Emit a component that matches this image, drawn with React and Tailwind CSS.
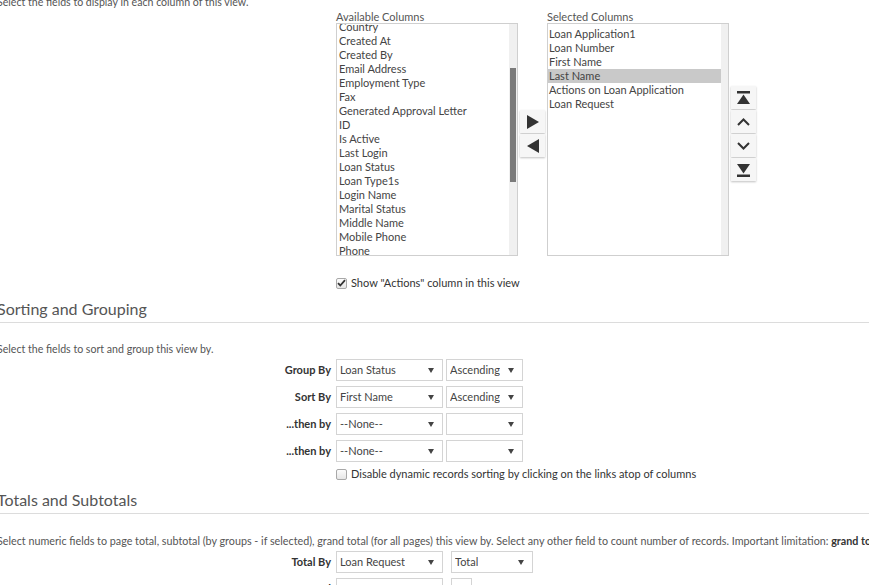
import React from "react";

const available = [
  "Country",
  "Created At",
  "Created By",
  "Email Address",
  "Employment Type",
  "Fax",
  "Generated Approval Letter",
  "ID",
  "Is Active",
  "Last Login",
  "Loan Status",
  "Loan Type1s",
  "Login Name",
  "Marital Status",
  "Middle Name",
  "Mobile Phone",
  "Phone",
];

const selected = [
  "Loan Application1",
  "Loan Number",
  "First Name",
  "Last Name",
  "Actions on Loan Application",
  "Loan Request",
];

const Caret = () => (
  <svg width="6" height="5" viewBox="0 0 6 5" className="shrink-0">
    <path d="M0 0h6L3 5z" fill="#444" />
  </svg>
);

const Select = ({ value, w }) => (
  <div
    className={`${w} h-[22px] border border-[#d4d4d4] bg-white flex items-center justify-between pl-[3px] pr-[8px] text-[#444]`}
  >
    <span className="whitespace-nowrap overflow-hidden">{value}</span>
    <Caret />
  </div>
);

const Check = ({ checked }) => (
  <span className="w-[11px] h-[11px] border border-[#a8a8a8] rounded-[2px] bg-gradient-to-b from-[#fcfcfc] to-[#e6e6e6] flex items-center justify-center shrink-0">
    {checked && (
      <svg width="9" height="8" viewBox="0 0 9 8">
        <path d="M1 4.2l2.3 2.3L8 1.2" stroke="#333" strokeWidth="1.8" fill="none" />
      </svg>
    )}
  </span>
);

const Btn = ({ children }) => (
  <div className="w-[25px] h-[23px] bg-[#f6f6f6] shadow-[0_1px_2px_rgba(0,0,0,0.25)] flex items-center justify-center">
    {children}
  </div>
);

const Heading = ({ children }) => (
  <div className="mt-[9px] border-b border-[#dcdcdc] pb-[3px]">
    <h2 className="-ml-[3px] text-[16px] leading-[20px] text-[#555]">{children}</h2>
  </div>
);

const Row = ({ label, a, b, wb = "w-[77px]", gap = "ml-[3px]", top = "mt-[5px]" }) => (
  <div className={`flex items-center ${top}`}>
    <div className="w-[331px] text-right font-bold text-[#333]">{label}</div>
    <div className="ml-[5px]">
      <Select value={a} w="w-[107px]" />
    </div>
    <div className={gap}>
      <Select value={b} w={wb} />
    </div>
  </div>
);

export default function App() {
  return (
    <div className="w-[869px] h-[585px] overflow-hidden bg-white font-['Lato','Noto_Sans',sans-serif] text-[11px] text-[#555]">
      <p className="-ml-[3px] -mt-[5px] leading-[14px] text-[10.6px]">
        Select the fields to display in each column of this view.
      </p>

      <div className="flex items-start ml-[336px] mt-[2px]">
        <div>
          <div className="leading-[12px] text-[#555]">Available Columns</div>
          <div className="relative w-[182px] h-[233px] border border-[#cfcfcf] overflow-hidden">
            <div className="-mt-[4px] pl-[2px] text-[#444]">
              {available.map((c) => (
                <div key={c} className="leading-[14px] whitespace-nowrap">
                  {c}
                </div>
              ))}
            </div>
            <div className="absolute right-0 top-0 bottom-0 w-[8px] bg-[#f0f0f0]">
              <div className="absolute left-[1px] top-[44px] w-[6px] h-[114px] bg-[#7b7b7b]" />
            </div>
          </div>
        </div>

        <div className="ml-[2px] pt-[99px] flex flex-col gap-[1px]">
          <Btn>
            <svg width="12" height="14" viewBox="0 0 12 14">
              <path d="M0 0l12 7L0 14z" fill="#333" />
            </svg>
          </Btn>
          <Btn>
            <svg width="12" height="14" viewBox="0 0 12 14">
              <path d="M12 0L0 7 12 14z" fill="#333" />
            </svg>
          </Btn>
        </div>

        <div className="ml-[2px]">
          <div className="leading-[12px] text-[#555]">Selected Columns</div>
          <div className="relative w-[182px] h-[233px] border border-[#cfcfcf] overflow-hidden">
            <div className="pt-[3px] text-[#444]">
              {selected.map((c) => (
                <div
                  key={c}
                  className={`leading-[14px] pl-[1px] w-[173px] whitespace-nowrap ${
                    c === "Last Name" ? "bg-[#c9c9c9]" : ""
                  }`}
                >
                  {c}
                </div>
              ))}
            </div>
            <div className="absolute right-0 top-0 bottom-0 w-[7px] bg-[#f0f0f0]" />
          </div>
        </div>

        <div className="ml-[2px] pt-[75px] flex flex-col gap-[1px]">
          <Btn>
            <svg width="13" height="14" viewBox="0 0 13 14">
              <rect x="0" y="0" width="13" height="2.5" fill="#333" />
              <path d="M6.5 3.5L13 13H0z" fill="#333" />
            </svg>
          </Btn>
          <Btn>
            <svg width="13" height="8" viewBox="0 0 13 8">
              <path d="M1 7l5.5-5.5L12 7" stroke="#333" strokeWidth="2" fill="none" />
            </svg>
          </Btn>
          <Btn>
            <svg width="13" height="8" viewBox="0 0 13 8">
              <path d="M1 1l5.5 5.5L12 1" stroke="#333" strokeWidth="2" fill="none" />
            </svg>
          </Btn>
          <Btn>
            <svg width="13" height="14" viewBox="0 0 13 14">
              <path d="M0 1h13L6.5 10.5z" fill="#333" />
              <rect x="0" y="11.5" width="13" height="2.5" fill="#333" />
            </svg>
          </Btn>
        </div>
      </div>

      <div className="flex items-center ml-[336px] mt-[20px] leading-[14px] text-[#333]">
        <Check checked />
        <span className="ml-[4px]">Show "Actions" column in this view</span>
      </div>

      <Heading>Sorting and Grouping</Heading>
      <p className="-ml-[3px] mt-[19px] leading-[14px] text-[10.6px]">
        Select the fields to sort and group this view by.
      </p>
      <Row label="Group By" a="Loan Status" b="Ascending" top="mt-[3px]" />
      <Row label="Sort By" a="First Name" b="Ascending" />
      <Row label="...then by" a="--None--" b="" />
      <Row label="...then by" a="--None--" b="" />
      <div className="flex items-center ml-[336px] mt-[5px] leading-[14px] text-[#333]">
        <Check />
        <span className="ml-[4px]">
          Disable dynamic records sorting by clicking on the links atop of columns
        </span>
      </div>

      <Heading>Totals and Subtotals</Heading>
      <p className="-ml-[3px] mt-[20px] leading-[14px] whitespace-nowrap text-[10.75px]">
        Select numeric fields to page total, subtotal (by groups - if selected), grand total (for all pages)
        this view by. Select any other field to count number of records. Important limitation:{" "}
        <b className="text-[#333]">grand total</b>
      </p>
      <Row label="Total By" a="Loan Request" b="Total" wb="w-[82px]" gap="ml-[8px]" top="mt-[3px]" />
      <Row label="...and" a="--None--" b="" wb="w-[21px]" gap="ml-[8px]" />
    </div>
  );
}
